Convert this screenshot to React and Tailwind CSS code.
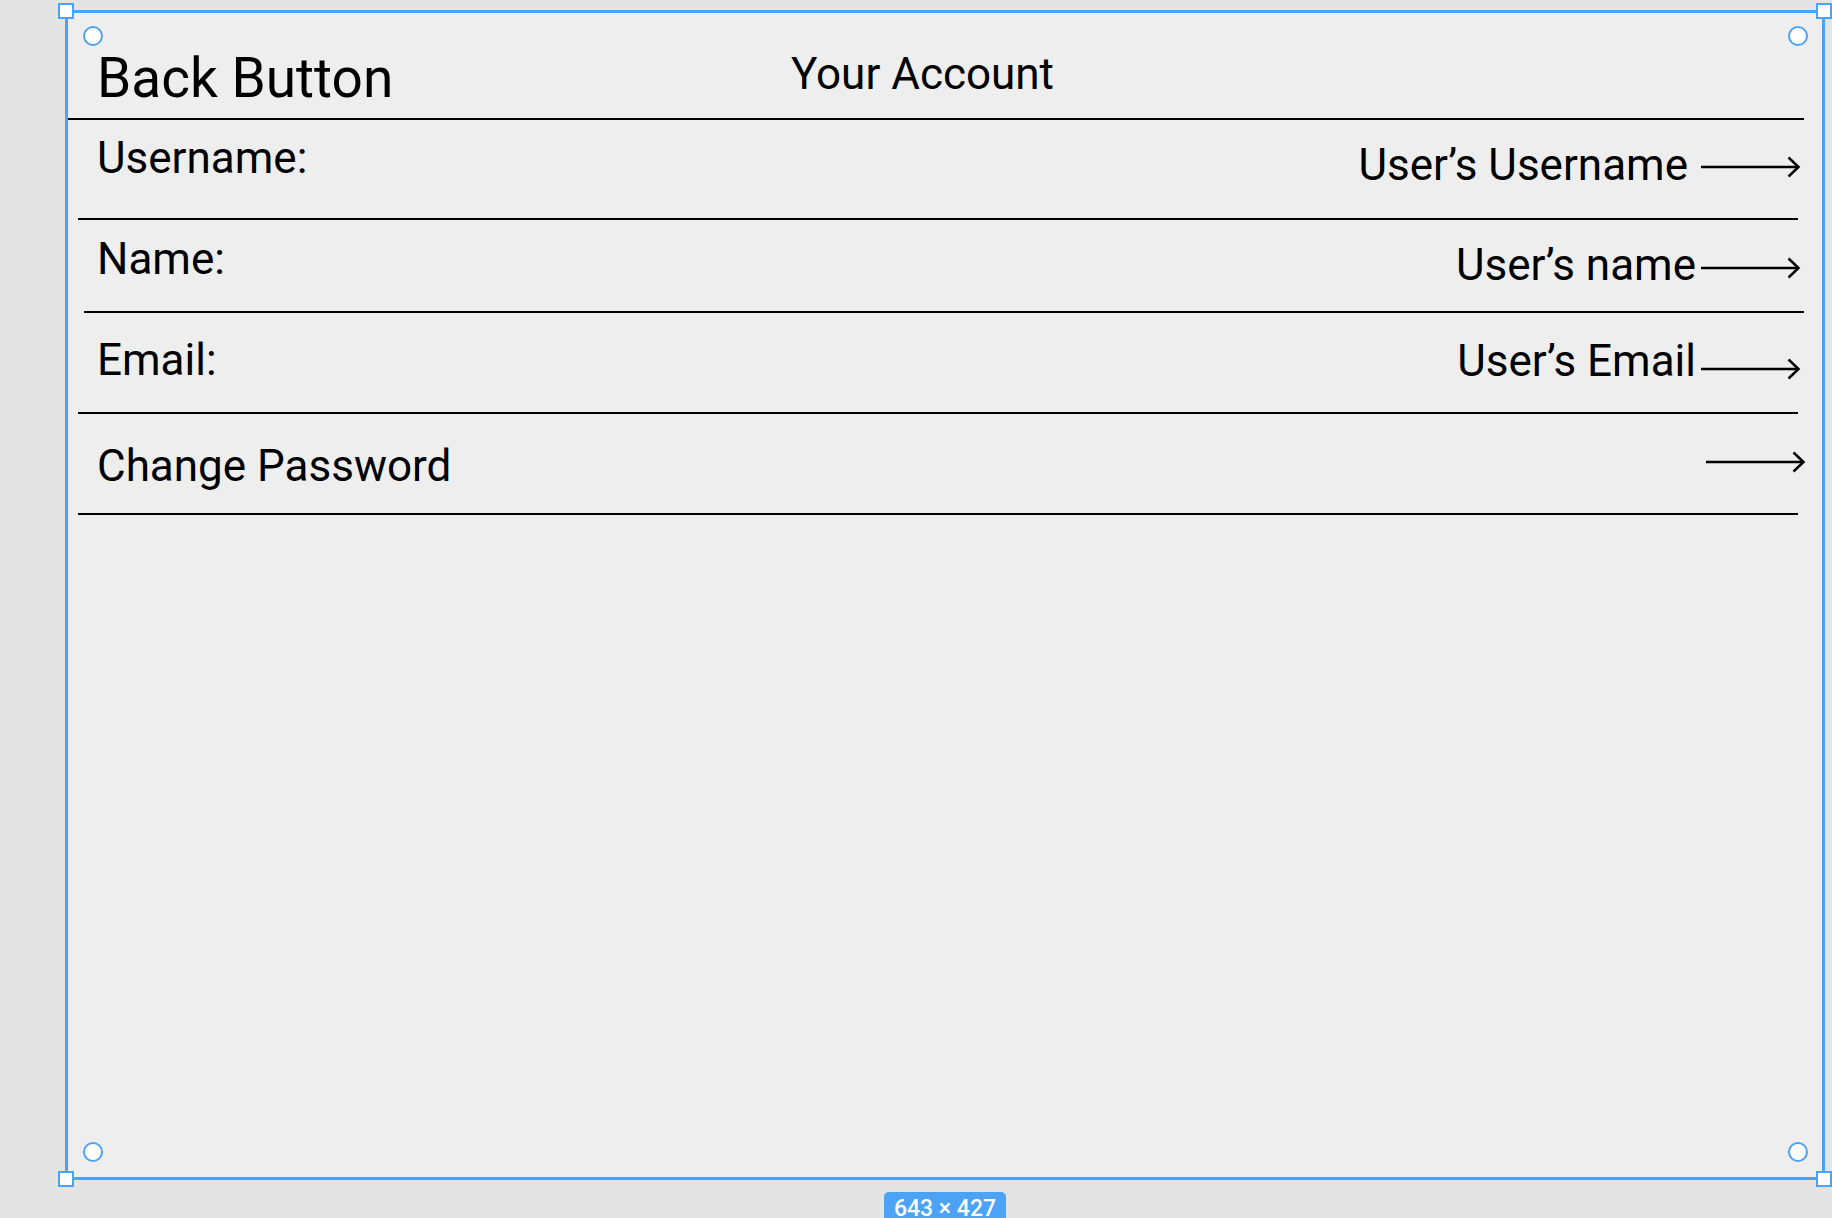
import React from 'react';

const rows = [
  {
    label: 'Username:',
    value: 'User’s Username',
    rowClass: 'h-[98px] pr-[21px]',
    labelClass: 'mt-[16px]',
    valueClass: 'mt-[23px] mr-[13px]',
    arrowClass: 'mt-[36px]',
    dividerClass: 'ml-[10px] mr-[24px]',
  },
  {
    label: 'Name:',
    value: 'User’s name',
    rowClass: 'h-[91px] pr-[21px]',
    labelClass: 'mt-[17px]',
    valueClass: 'mt-[23px] mr-[5px]',
    arrowClass: 'mt-[37px]',
    dividerClass: 'ml-[16px] mr-[18px]',
  },
  {
    label: 'Email:',
    value: 'User’s Email',
    rowClass: 'h-[99px] pr-[21px]',
    labelClass: 'mt-[25px]',
    valueClass: 'mt-[26px] mr-[5px]',
    arrowClass: 'mt-[45px]',
    dividerClass: 'ml-[10px] mr-[24px]',
  },
  {
    label: 'Change Password',
    value: null,
    rowClass: 'h-[99px] pr-[16px]',
    labelClass: 'mt-[30px]',
    valueClass: '',
    arrowClass: 'mt-[37px]',
    dividerClass: 'ml-[10px] mr-[24px]',
  },
];

const Arrow = ({ className }) => (
  <svg width="100" height="22" viewBox="0 0 100 22" fill="none" className={className}>
    <path d="M0 11H97" stroke="#000" strokeWidth="2.5" />
    <path d="M87.5 1.5L97.5 11L87.5 20.5" stroke="#000" strokeWidth="2.5" strokeLinejoin="miter" />
  </svg>
);

const Handle = ({ className }) => (
  <div className={`absolute w-[16px] h-[16px] bg-white border-2 border-[#4ca2f5] ${className}`} />
);

const Dot = ({ className }) => (
  <div className={`absolute w-[20px] h-[20px] rounded-full bg-white border-[2.5px] border-[#4ca2f5] ${className}`} />
);

const App = () => {
  return (
    <div className="w-[1832px] h-[1218px] overflow-hidden bg-[#e4e4e4] text-black font-['Roboto',_'Liberation_Sans',_sans-serif]">
      <div className="relative ml-[65px] mt-[10px] w-[1760px] h-[1170px] border-[3px] border-[#4ca2f5] bg-[#eeeeee]">
        {/* header */}
        <div className="flex items-start h-[105px] pt-[38px] pl-[29px]">
          <div className="w-[694px] text-[55px] leading-none">Back Button</div>
          <div className="text-[44px] leading-none mt-[1px]">Your Account</div>
        </div>
        <div className="h-[2px] bg-black mr-[18px]" />

        {rows.map((row) => (
          <div key={row.label}>
            <div className={`flex justify-between items-start pl-[29px] ${row.rowClass}`}>
              <div className={`text-[44px] leading-none ${row.labelClass}`}>{row.label}</div>
              <div className="flex items-start">
                {row.value && (
                  <div className={`text-[44px] leading-none ${row.valueClass}`}>{row.value}</div>
                )}
                <Arrow className={row.arrowClass} />
              </div>
            </div>
            <div className={`h-[2px] bg-black ${row.dividerClass}`} />
          </div>
        ))}

        {/* selection handles */}
        <Handle className="-left-[10px] -top-[10px]" />
        <Handle className="-right-[10px] -top-[10px]" />
        <Handle className="-left-[10px] -bottom-[10px]" />
        <Handle className="-right-[10px] -bottom-[10px]" />
        <Dot className="left-[15px] top-[13px]" />
        <Dot className="right-[14px] top-[13px]" />
        <Dot className="left-[15px] bottom-[15px]" />
        <Dot className="right-[14px] bottom-[15px]" />
      </div>

      <div className="ml-[65px] w-[1760px] flex justify-center pt-[12px]">
        <div className="w-[122px] h-[34px] rounded-[5px] bg-[#4ca2f5] text-white text-[23px] leading-none font-medium text-center pt-[5px]">
          643 × 427
        </div>
      </div>
    </div>
  );
};

export default App;
